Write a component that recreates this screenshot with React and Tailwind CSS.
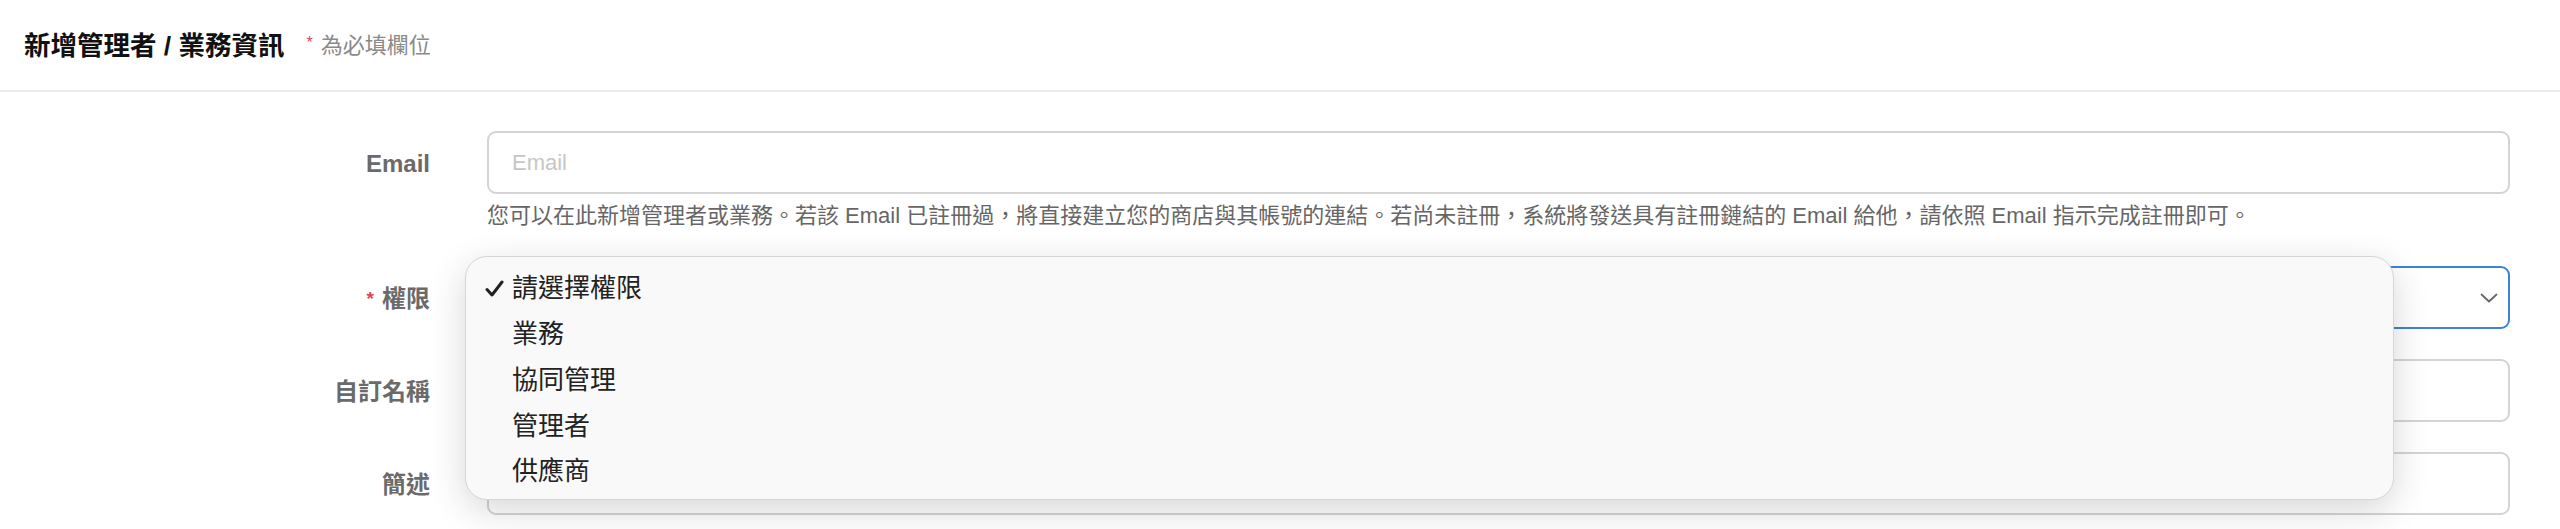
const roles = ["請選擇權限", "業務", "協同管理", "管理者", "供應商"];

const font = { fontFamily: '"Liberation Sans", "Noto Sans CJK TC", sans-serif' };

const Label = ({ children, required }) => (
  <div className="w-[430px] h-[63px] shrink-0 flex items-center justify-end text-[24px] font-bold text-[#6a6a6a] pt-[3px]">
    {required && <span className="text-[#e0465b] text-[19px] mr-[8px] font-bold">*</span>}
    {children}
  </div>
);

const App = () => {
  return (
    <div className="w-[2560px] h-[529px] bg-white overflow-hidden" style={font}>
      <div className="h-[92px] border-b-2 border-[#ececec] flex items-center pl-[24px] pt-[2px]">
        <h1 className="text-[26.5px] font-bold text-[#111] leading-none">新增管理者 / 業務資訊</h1>
        <span className="ml-[22px] text-[#e0465b] text-[16px] leading-none -mt-[6px]">*</span>
        <span className="ml-[8px] text-[22px] text-[#8a8a8a] leading-none">為必填欄位</span>
      </div>

      <div className="pt-[39px] pr-[50px] flex flex-col">
        <div className="flex items-start">
          <Label>Email</Label>
          <div className="ml-[57px] flex-1">
            <input
              placeholder="Email"
              className="w-full h-[63px] border-2 border-[#d4d4d4] rounded-[9px] px-[23px] text-[22px] placeholder:text-[#c6c6c6] outline-none"
            />
            <p className="mt-[7px] text-[22px] leading-[30px] text-[#666] whitespace-nowrap">
              您可以在此新增管理者或業務。若該 Email 已註冊過，將直接建立您的商店與其帳號的連結。若尚未註冊，系統將發送具有註冊鏈結的 Email 給他，請依照 Email 指示完成註冊即可。
            </p>
          </div>
        </div>

        <div className="flex items-start mt-[35px]">
          <Label required>權限</Label>
          <div className="ml-[57px] flex-1 relative">
            <div className="h-[63px] border-2 border-[#3d83d6] rounded-[9px] flex items-center justify-end pr-[10px]">
              <svg width="18" height="10" viewBox="0 0 18 10" fill="none" stroke="#666" strokeWidth="1.8" strokeLinecap="round" strokeLinejoin="round">
                <path d="M1.5 1.5 L9 8.5 L16.5 1.5" />
              </svg>
            </div>

            <div className="absolute left-[-22px] top-[-10px] w-[1929px] h-[244px] rounded-[22px] bg-[#f9f9f9] border border-[#d6d6d6] shadow-[0_10px_36px_rgba(0,0,0,0.16)] pt-[9px] z-10">
              {roles.map((role, i) => (
                <div key={role} className="h-[45.75px] flex items-center text-[26px] text-[#222]">
                  <div className="w-[46px] flex justify-end pr-[8px]">
                    {i === 0 && (
                      <svg width="19" height="17" viewBox="0 0 19 17" fill="none" stroke="#222" strokeWidth="3" strokeLinecap="round" strokeLinejoin="round">
                        <path d="M2 9.5 L7 15 L17 2" />
                      </svg>
                    )}
                  </div>
                  <span>{role}</span>
                </div>
              ))}
            </div>
          </div>
        </div>

        <div className="flex items-start mt-[30px]">
          <Label>自訂名稱</Label>
          <div className="ml-[57px] flex-1">
            <input className="w-full h-[63px] border-2 border-[#d4d4d4] rounded-[9px] px-[23px] text-[22px] outline-none" />
          </div>
        </div>

        <div className="flex items-start mt-[30px]">
          <Label>簡述</Label>
          <div className="ml-[57px] flex-1">
            <input className="w-full h-[63px] border-2 border-[#d4d4d4] rounded-[9px] px-[23px] text-[22px] outline-none" />
          </div>
        </div>
      </div>
    </div>
  );
};

export default App;
